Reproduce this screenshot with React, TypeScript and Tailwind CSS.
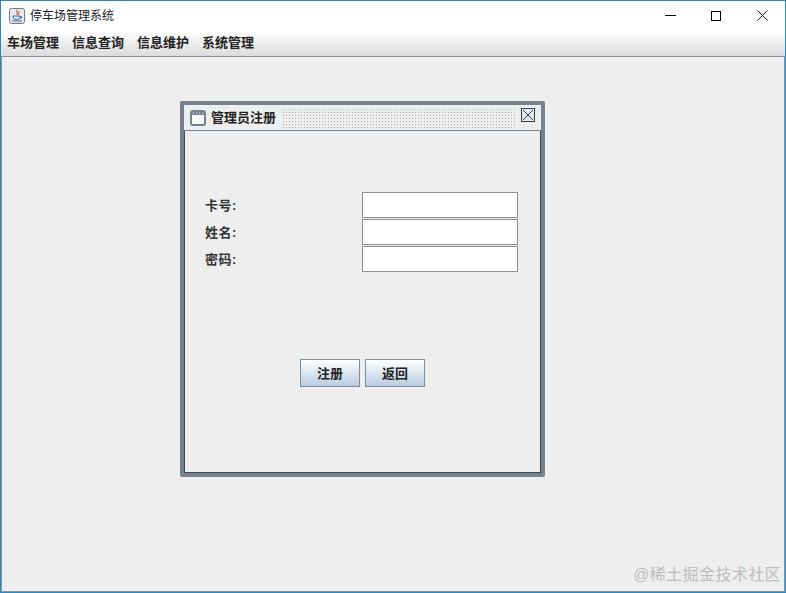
import { useState } from 'react';

const menus = ['车场管理', '信息查询', '信息维护', '系统管理'];
const fields = ['卡号:', '姓名:', '密码:'];

function JavaIcon() {
  return (
    <svg width="16" height="16" viewBox="0 0 16 16" className="shrink-0">
      <rect x="0.5" y="0.5" width="15" height="15" rx="2" fill="#e4e9f0" stroke="#6f7a89" />
      <path d="M8 2 C6 4 10 5 8 7 M10 3 C9 4 10.5 5 9.5 6.5" fill="none" stroke="#d8662a" strokeWidth="1.2" />
      <path d="M4 8 H11 V9 C11 11 9.5 11.5 7.5 11.5 C5.5 11.5 4 11 4 9 Z M11 8.5 H12.5 V10 H11" fill="none" stroke="#3f6a9e" />
      <path d="M3 13 H13" stroke="#3f6a9e" />
    </svg>
  );
}

function FrameIcon() {
  return (
    <svg width="16" height="16" viewBox="0 0 16 16" className="shrink-0">
      <rect x="1" y="1" width="14" height="14" rx="2" fill="#f7f8f9" stroke="#76828f" strokeWidth="2" />
      <rect x="1" y="1" width="14" height="4" fill="#76828f" />
      <path d="M3 3 H4 M6 3 H7 M9 3 H10 M12 3 H13" stroke="#e6e9ec" />
    </svg>
  );
}

export default function App() {
  const [valores, setValores] = useState(['', '', '']);

  return (
    <div className="flex h-[593px] w-[786px] flex-col overflow-hidden border border-[#2f87bd] bg-white font-['Liberation_Sans','Noto_Sans_CJK_SC',sans-serif] text-[#222]">
      {/* Barra de título */}
      <div className="flex h-[29px] shrink-0 items-center bg-white pl-[8px]">
        <JavaIcon />
        <span className="ml-[5px] text-[12px] text-[#222]">停车场管理系统</span>
        <div className="ml-auto flex h-full items-center">
          <div className="flex h-full w-[46px] items-center justify-center">
            <div className="h-px w-[11px] bg-black" />
          </div>
          <div className="flex h-full w-[46px] items-center justify-center">
            <div className="h-[10px] w-[10px] border border-black" />
          </div>
          <div className="flex h-full w-[46px] items-center justify-center">
            <svg width="11" height="11" viewBox="0 0 11 11">
              <path d="M0.5 0.5 L10.5 10.5 M10.5 0.5 L0.5 10.5" stroke="#000" strokeWidth="0.9" />
            </svg>
          </div>
        </div>
      </div>

      {/* Menu */}
      <div className="flex h-[26px] shrink-0 items-center gap-[13px] bg-gradient-to-b from-white to-[#dcdcdc] pl-[6px]">
        {menus.map((menu) => (
          <span key={menu} className="text-[13px] font-bold text-[#222]">
            {menu}
          </span>
        ))}
      </div>

      {/* Área de trabalho */}
      <div className="relative flex-1 border border-[#8a949e] bg-[#eeeeee]">
        <div className="absolute left-[178px] top-[44px] flex h-[376px] w-[365px] flex-col rounded-[2px] border-[4px] border-[#76828f] bg-[#eeeeee]">
          <div className="flex h-[26px] shrink-0 items-center border-b border-[#76828f] pl-[6px] pr-[6px]">
            <FrameIcon />
            <span className="ml-[5px] text-[13px] font-bold text-[#222]">管理员注册</span>
            <div className="ml-[6px] mr-[5px] h-[20px] flex-1 bg-[radial-gradient(#a9afb5_1px,transparent_1px)] bg-[length:3px_3px]" />
            <div className="mb-[5px] flex h-[14px] w-[14px] shrink-0 items-center justify-center border border-[#33404d] bg-[#e6eaee]">
              <svg width="12" height="12" viewBox="0 0 12 12">
                <path d="M1 1 L11 11 M11 1 L1 11" stroke="#33404d" />
              </svg>
            </div>
          </div>

          <div className="flex flex-1 flex-col border-x border-b border-[#3d4a57]">
            <div className="mt-[61px] flex flex-col gap-px pl-[177px] pr-[23px]">
              {fields.map((campo, i) => (
                <div key={campo} className="relative">
                  <label className="absolute left-[-157px] top-[4px] text-[13px] font-bold tracking-[0.5px] text-[#333]">{campo}</label>
                  <input
                    value={valores[i]}
                    onChange={(e) => setValores(valores.map((v, j) => (j === i ? e.target.value : v)))}
                    className="block h-[26px] w-[156px] border border-[#8a9199] bg-white outline-none"
                  />
                </div>
              ))}
            </div>

            <div className="mt-[87px] flex justify-center gap-[5px]">
              <button className="h-[28px] w-[60px] border border-[#7d8f9f] bg-gradient-to-b from-white to-[#b9cde0] pt-px text-[13px] font-bold text-[#222]">
                注册
              </button>
              <button className="h-[28px] w-[60px] border border-[#7d8f9f] bg-gradient-to-b from-white to-[#b9cde0] pt-px text-[13px] font-bold text-[#222]">
                返回
              </button>
            </div>
          </div>
        </div>

        <span className="absolute bottom-[4px] right-[3px] text-[16px] tracking-[0.4px] text-[#bdbdbd]">@稀土掘金技术社区</span>
      </div>
    </div>
  );
}
